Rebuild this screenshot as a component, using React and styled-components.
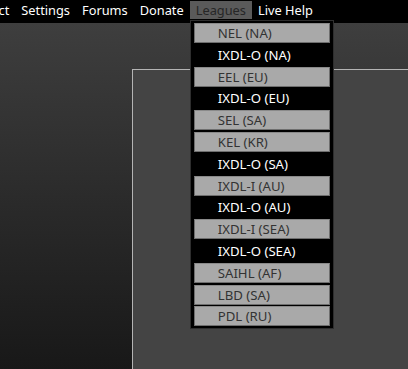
import styled, { createGlobalStyle } from "styled-components";

const GlobalStyle = createGlobalStyle`
  html, body {
    margin: 0;
    padding: 0;
    background: #000;
  }
  body {
    width: 408px;
    height: 369px;
    overflow: hidden;
    font-family: "Noto Sans", "Open Sans", sans-serif;
  }
`;

const Page = styled.div`
  display: flex;
  flex-direction: column;
  width: 408px;
  height: 369px;
  overflow: hidden;
`;

const MenuBar = styled.nav`
  display: flex;
  align-items: flex-start;
  height: 23px;
  flex-shrink: 0;
  background: #000;
  position: relative;
  z-index: 2;
`;

const MenuList = styled.ul`
  display: flex;
  list-style: none;
  margin: 0 0 0 -43px;
  padding: 0;
`;

const MenuItem = styled.li`
  position: relative;
  height: 18px;
  margin-top: 1px;
  padding: 0 6px;
  font-size: 12.8px;
  line-height: 19px;
  white-space: nowrap;
  color: ${(p) => (p.active ? "#262626" : "#fff")};
  background: ${(p) => (p.active ? "#5a5a5a" : "transparent")};
`;

const Dropdown = styled.ul`
  position: absolute;
  top: 19px;
  left: 0;
  width: 136px;
  list-style: none;
  margin: 0;
  padding: 2px 3px 2px;
  background: #000;
  border: 1px solid #2e2e2e;
`;

const DropItem = styled.li`
  box-sizing: border-box;
  height: 20px;
  margin-bottom: 1.8px;
  padding-left: 23px;
  font-size: 13.2px;
  line-height: 19px;
  color: ${(p) => (p.dark ? "#fff" : "#333")};
  background: ${(p) => (p.dark ? "#000" : "#a9a9a9")};
  border: 1px solid ${(p) => (p.dark ? "#000" : "#6e6e6e")};
  border-top-color: ${(p) => (p.dark ? "#000" : "#8a8a8a")};

  &:last-child {
    margin-bottom: 0;
  }
`;

const Main = styled.main`
  flex: 1;
  display: flex;
  background: linear-gradient(#3e3e3e, #181818);
`;

const Panel = styled.section`
  flex: 1;
  margin: 46px 0 0 132px;
  background: #444;
  border-top: 1px solid #b4b4b4;
  border-left: 1px solid #b4b4b4;
`;

const leagues = [
  ["NEL (NA)", false],
  ["IXDL-O (NA)", true],
  ["EEL (EU)", false],
  ["IXDL-O (EU)", true],
  ["SEL (SA)", false],
  ["KEL (KR)", false],
  ["IXDL-O (SA)", true],
  ["IXDL-I (AU)", false],
  ["IXDL-O (AU)", true],
  ["IXDL-I (SEA)", false],
  ["IXDL-O (SEA)", true],
  ["SAIHL (AF)", false],
  ["LBD (SA)", false],
  ["PDL (RU)", false],
];

const App = () => {
  return (
    <Page>
      <GlobalStyle />
      <MenuBar>
        <MenuList>
          <MenuItem>Contact</MenuItem>
          <MenuItem>Settings</MenuItem>
          <MenuItem>Forums</MenuItem>
          <MenuItem>Donate</MenuItem>
          <MenuItem active>
            Leagues
            <Dropdown>
              {leagues.map(([name, dark]) => (
                <DropItem key={name} dark={dark}>
                  {name}
                </DropItem>
              ))}
            </Dropdown>
          </MenuItem>
          <MenuItem>Live Help</MenuItem>
        </MenuList>
      </MenuBar>
      <Main>
        <Panel />
      </Main>
    </Page>
  );
};

export default App;
